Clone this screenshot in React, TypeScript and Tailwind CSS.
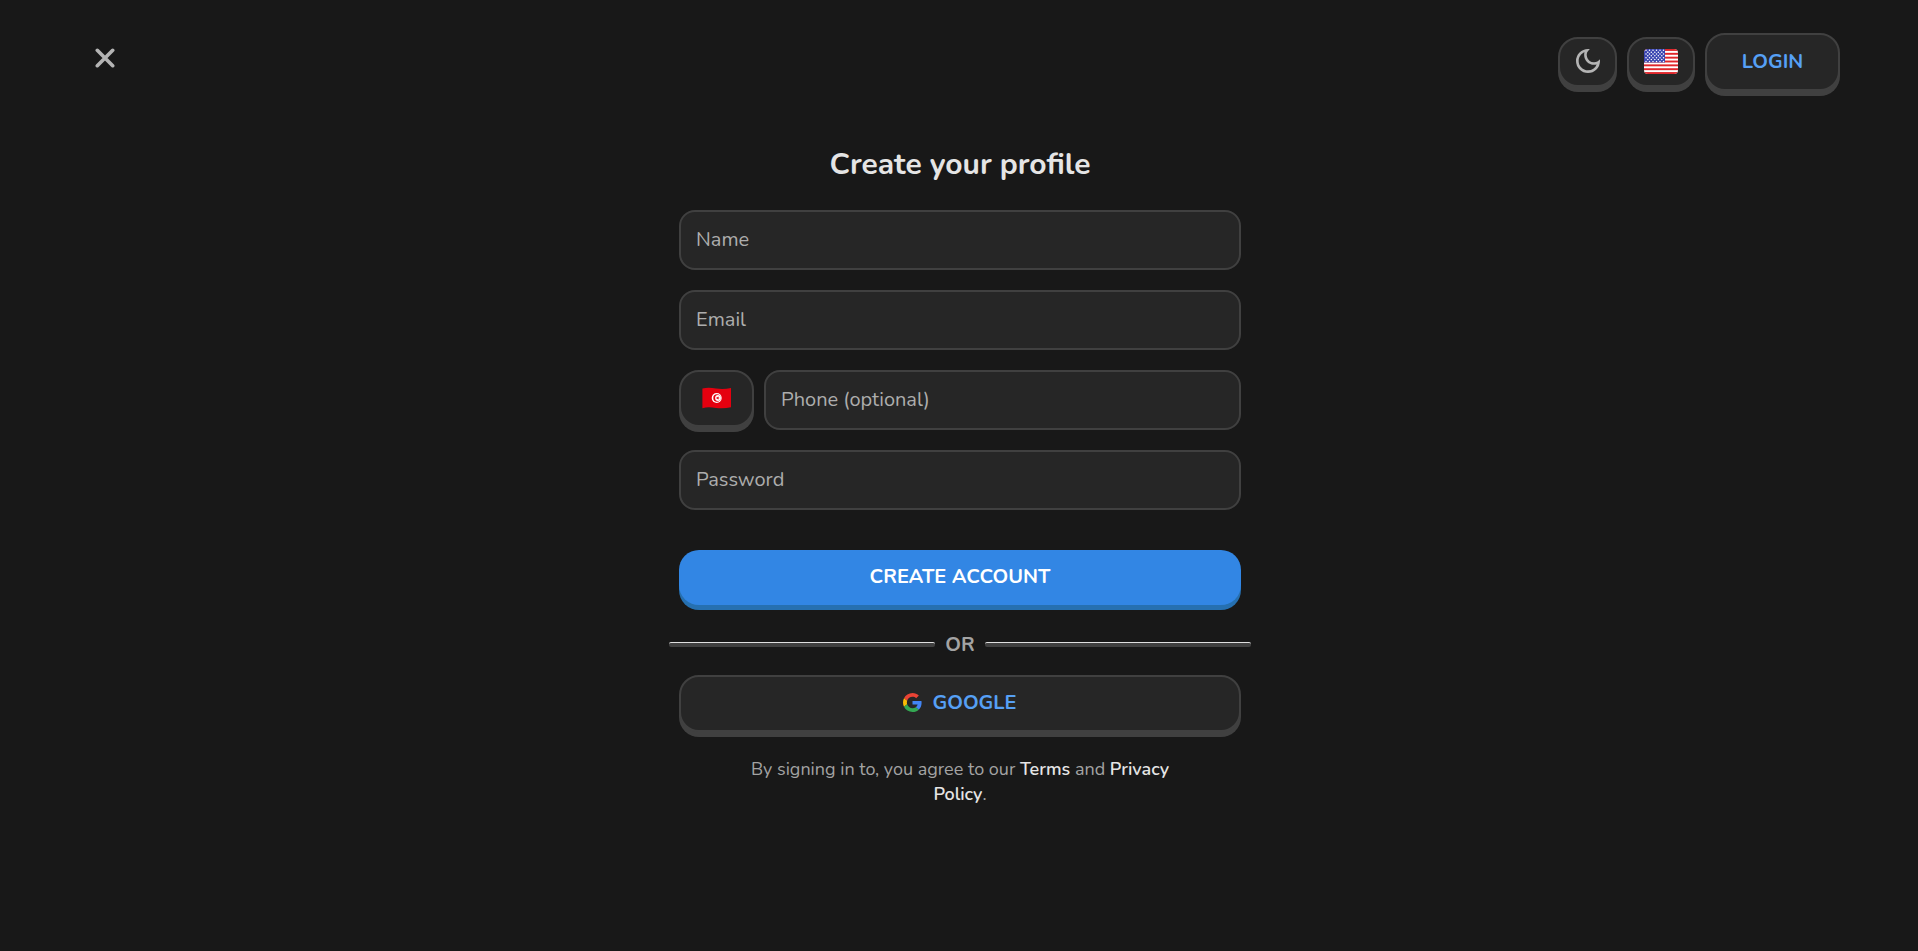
import type { InputHTMLAttributes } from "react";
import { MdOutlineDarkMode } from "react-icons/md";

const raised =
  "flex cursor-pointer items-center justify-center rounded-[20px] border-2 border-[#404040] bg-[#262626] shadow-[0_5px_0_#404040] focus-visible:outline-2 focus-visible:outline-[#4e9df5]";

const stripes = [0, 2, 4, 6, 8, 10, 12];
const starRows = [0, 1, 2, 3, 4, 5, 6];

function UsFlag() {
  return (
    <svg viewBox="0 0 34 25" className="h-[25px] w-[34px] rounded-[4px]" preserveAspectRatio="none" aria-hidden="true">
      <rect width="34" height="25" fill="#fff" />
      {stripes.map((n) => (
        <rect key={n} y={n * 1.923} width="34" height="1.923" fill="#e0262b" />
      ))}
      <rect width="21" height="13.46" fill="#3a45b0" />
      {starRows.map((row) =>
        (row % 2 ? [3.8, 7.3, 10.8, 14.3, 17.8] : [2, 5.5, 9, 12.5, 16, 19.5]).map((x) => (
          <circle key={x} cx={x} cy={1.3 + row * 1.85} r="0.75" fill="#fff" />
        )),
      )}
    </svg>
  );
}

function TunisiaFlag() {
  return (
    <svg viewBox="0 0 30 22" className="h-[22px] w-[30px]" aria-hidden="true">
      <path d="M.4 1.6C5 .2 9 .6 14 1.4s10 .6 15-.5v19.3c-5 1.2-10 1.4-15 .7S5 19.9.4 21.2Z" fill="#e5000f" />
      <circle cx="14.7" cy="11" r="5" fill="#fff" />
      <circle cx="15" cy="11" r="3.7" fill="#e5000f" />
      <circle cx="16" cy="11" r="2.9" fill="#fff" />
      <path d="m17.700 11-1.300.5v1.300l-.9-1.100-1.300.4.800-1.100-.8-1.100 1.300.4.900-1.100v1.300Z" fill="#e5000f" />
    </svg>
  );
}

function GoogleLogo() {
  return (
    <svg viewBox="0 0 48 48" className="size-[19px]" aria-hidden="true">
      <path fill="#EA4335" d="M24 9.5c3.54 0 6.71 1.22 9.21 3.6l6.85-6.85C35.9 2.38 30.47 0 24 0 14.62 0 6.51 5.38 2.56 13.22l7.98 6.19C12.43 13.72 17.74 9.5 24 9.5z" />
      <path fill="#4285F4" d="M46.98 24.55c0-1.57-.15-3.09-.38-4.55H24v9.02h12.94c-.58 2.96-2.26 5.48-4.78 7.18l7.73 6c4.51-4.18 7.09-10.36 7.09-17.65z" />
      <path fill="#FBBC05" d="M10.53 28.59c-.48-1.45-.76-2.99-.76-4.59s.27-3.14.76-4.59l-7.98-6.19C.92 16.46 0 20.12 0 24c0 3.88.92 7.54 2.56 10.78l7.97-6.19z" />
      <path fill="#34A853" d="M24 48c6.48 0 11.93-2.13 15.89-5.81l-7.73-6c-2.15 1.45-4.92 2.3-8.16 2.3-6.26 0-11.57-4.22-13.47-9.91l-7.98 6.19C6.51 42.62 14.62 48 24 48z" />
    </svg>
  );
}

function Field({ label, ...rest }: { label: string } & InputHTMLAttributes<HTMLInputElement>) {
  return (
    <input
      aria-label={label}
      placeholder={label}
      className="block h-[60px] w-full min-w-0 rounded-2xl border-2 border-[#404040] bg-[#262626] px-[15px] pb-[2px] text-xl text-[#e5e5e5] outline-none placeholder:text-[#adadad] focus:border-[#4e9df5]"
      {...rest}
    />
  );
}

function Rule() {
  return <span className="h-[5px] flex-1 rounded-[2px] border-t border-[#e0e0e0] bg-[#404040]" />;
}

export default function App() {
  return (
    <div className="min-h-screen bg-[#181818] pb-10 font-['Nunito','Open_Sans','Noto_Sans',sans-serif] text-[#e5e5e5]">
      <header className="flex items-start justify-between px-5 pt-[33px] md:px-[78px]">
        <button type="button" aria-label="Close" className="flex h-[50px] w-[54px] cursor-pointer items-center justify-center">
          <svg viewBox="0 0 20 20" className="size-5" fill="none" stroke="#b4b4b4" strokeWidth="3.6" strokeLinecap="round" aria-hidden="true">
            <path d="m2.300 2.300 15.400 15.400M17.700 2.300 2.300 17.700" />
          </svg>
        </button>
        <nav className="flex items-center gap-[10px]">
          <button type="button" aria-label="Toggle theme" className={`${raised} h-[50px] w-[59px] pb-[2px]`}>
            <MdOutlineDarkMode className="size-8 text-[#b4b4b4]" aria-hidden="true" />
          </button>
          <button type="button" aria-label="Language" className={`${raised} h-[50px] w-[68px] pb-[2px]`}>
            <UsFlag />
          </button>
          <button type="button" className={`${raised} h-[58px] w-[135px] text-xl font-bold text-[#56a0f5]`}>
            LOGIN
          </button>
        </nav>
      </header>

      <main className="mx-auto mt-[54px] w-full max-w-[604px] pr-5 pl-[22px]">
        <h1 className="text-center text-3xl leading-10 font-bold">Create your profile</h1>
        <form className="mt-[25px]" onSubmit={(e) => e.preventDefault()}>
          <div className="flex flex-col gap-5">
            <Field label="Name" name="name" autoComplete="name" />
            <Field label="Email" name="email" type="email" autoComplete="email" />
            <div className="flex items-start gap-[10px]">
              <button type="button" aria-label="Country code" className={`${raised} h-[57px] w-[75px] shrink-0 pb-[2px]`}>
                <TunisiaFlag />
              </button>
              <Field label="Phone (optional)" name="phone" type="tel" autoComplete="tel" />
            </div>
            <Field label="Password" name="password" type="password" autoComplete="new-password" />
          </div>
          <button
            type="submit"
            className="mt-10 flex h-[55px] w-full cursor-pointer items-center justify-center rounded-[20px] bg-[#3286e4] pb-[2px] text-xl font-bold text-white shadow-[0_5px_0_#2670b0]"
          >
            CREATE ACCOUNT
          </button>
        </form>

        <div className="-mx-[10px] mt-[25px] flex h-[29px] items-center gap-[10px] text-xl font-bold text-[#a3a3a3]">
          <Rule />
          OR
          <Rule />
        </div>

        <button type="button" className={`${raised} mt-4 h-[57px] w-full gap-[10px] pb-[2px] text-xl font-bold text-[#56a0f5]`}>
          <GoogleLogo />
          GOOGLE
        </button>

        <p className="mx-auto mt-[25px] max-w-[450px] text-center text-lg leading-[25px] text-[#a3a3a3]">
          By signing in to, you agree to our{" "}
          <a href="#terms" className="font-semibold text-[#e5e5e5]">
            Terms
          </a>{" "}
          and{" "}
          <a href="#privacy" className="font-semibold text-[#e5e5e5]">
            Privacy Policy
          </a>
          .
        </p>
      </main>
    </div>
  );
}
